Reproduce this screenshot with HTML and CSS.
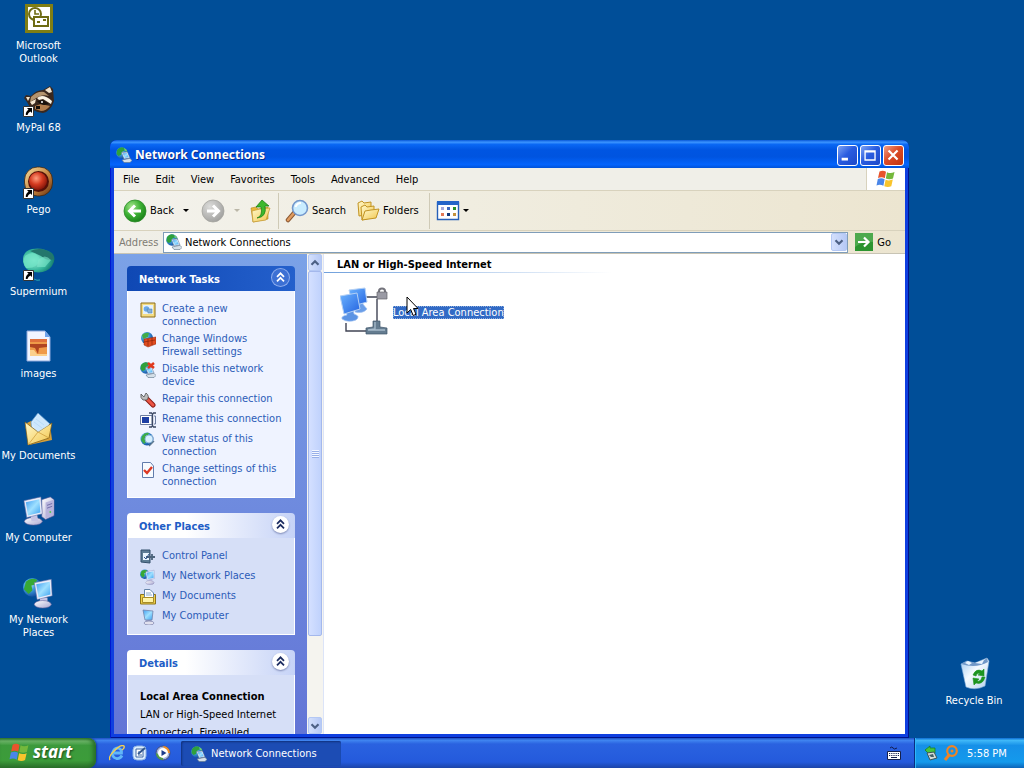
FILE: index.html
```html
<!DOCTYPE html>
<html lang="en">
<head>
  <meta charset="UTF-8">
  <meta name="viewport" content="width=device-width,initial-scale=1.0">
  <title>Network Connections</title>
  <link rel="stylesheet" href="styles.css">
</head>
<body>

<!-- shared icons -->
<svg class="sprite" width="0" height="0" aria-hidden="true">
  <defs>
    <linearGradient id="gScreen" x1="0" y1="0" x2="1" y2="1"><stop offset="0" stop-color="#3f9cf0"/><stop offset=".5" stop-color="#9fe0ff"/><stop offset="1" stop-color="#3aa0f0"/></linearGradient>
    <linearGradient id="gBlue" x1="0" y1="0" x2="1" y2="1"><stop offset="0" stop-color="#6db4ff"/><stop offset="1" stop-color="#2363e0"/></linearGradient>
    <linearGradient id="gCase" x1="0" y1="0" x2="1" y2="1"><stop offset="0" stop-color="#fff"/><stop offset="1" stop-color="#a9a6d0"/></linearGradient>
    <radialGradient id="gGlobe" cx=".35" cy=".35" r=".75"><stop offset="0" stop-color="#d8f4ff"/><stop offset=".4" stop-color="#3f9fe0"/><stop offset="1" stop-color="#0b3f94"/></radialGradient>
    <radialGradient id="gGreen" cx=".35" cy=".3" r=".8"><stop offset="0" stop-color="#a4e58c"/><stop offset=".5" stop-color="#3cb034"/><stop offset="1" stop-color="#157a14"/></radialGradient>
    <radialGradient id="gGrey" cx=".35" cy=".3" r=".8"><stop offset="0" stop-color="#dcdcda"/><stop offset="1" stop-color="#9c9c9a"/></radialGradient>
    <linearGradient id="gFolder" x1="0" y1="0" x2="1" y2="1"><stop offset="0" stop-color="#fff9cc"/><stop offset="1" stop-color="#f2c64c"/></linearGradient>
    <radialGradient id="gRed" cx=".4" cy=".35" r=".7"><stop offset="0" stop-color="#ff9c7c"/><stop offset=".5" stop-color="#d43a20"/><stop offset="1" stop-color="#7c1208"/></radialGradient>
    <linearGradient id="gGold" x1="0" y1="0" x2="1" y2="1"><stop offset="0" stop-color="#f7e0a0"/><stop offset=".6" stop-color="#c07c38"/><stop offset="1" stop-color="#5e2c10"/></linearGradient>
    <radialGradient id="gTeal" cx=".35" cy=".5" r=".7"><stop offset="0" stop-color="#a4f4dc"/><stop offset=".6" stop-color="#35b79c"/><stop offset="1" stop-color="#0b6a62"/></radialGradient>
    <linearGradient id="gBin" x1="0" y1="0" x2="1" y2="1"><stop offset="0" stop-color="#9cc8f0"/><stop offset=".45" stop-color="#f4faff"/><stop offset="1" stop-color="#b4d0ee"/></linearGradient>
  </defs>

  <symbol id="flag" viewBox="0 0 20 20">
    <path d="M3.500 2.500Q7 .8 10 2.800L8.800 9.200Q5.800 7.400 2 9z" fill="#e8542c"/>
    <path d="M11 3.200Q14.500 5 18.500 3L17 9.500Q13.500 11 9.800 9.500z" fill="#74b83c"/>
    <path d="M1.800 10Q5.500 8.500 8.600 10.200L7.400 16.800Q4 15 .5 16.500z" fill="#4a86e8"/>
    <path d="M9.600 10.700Q13 12.200 16.800 10.600L15.300 17.200Q12 18.800 8.300 17.300z" fill="#f9c42c"/>
  </symbol>

  <symbol id="net" viewBox="0 0 16 16">
    <circle cx="6" cy="6" r="5.800" fill="url(#gGlobe)"/>
    <path d="M1 3Q4-1 8 .8L9 3 6 5 5 8 2.500 9 .5 7z" fill="#2fa03c"/>
    <path d="M8 1Q11 2 11.500 5L9 4z" fill="#6fd070"/>
    <path d="M5.500 5.500 11.500 5 14 11 8 12z" fill="#eef4fb" stroke="#50688c" stroke-width=".5"/>
    <path d="M6.600 6.300 11 6 12.800 10.200 8.600 10.900z" fill="url(#gScreen)"/>
    <path d="M6 13 14 11.300 16 13.500 14 15.500 8 15.500z" fill="#d5dfe8" stroke="#5c7488" stroke-width=".6"/>
  </symbol>

  <symbol id="computer" viewBox="0 0 34 34">
    <path d="M20 5 29 2 33 5V22L24 26 20 23z" fill="url(#gCase)" stroke="#5b5b9c" stroke-width=".6"/>
    <path d="M24 8V25L32.500 21V5z" fill="#b8b4dc"/>
    <path d="M25.500 11 31 9M25.500 14 31 12" stroke="#6e6ca8"/>
    <circle cx="29" cy="18" r="1" fill="#52cc50"/>
    <ellipse cx="11" cy="28" rx="9.500" ry="4" fill="url(#gCase)" stroke="#5e5c98" stroke-width=".6"/>
    <path d="M8 21 15 20 16 28 9 28z" fill="#c6c4e4"/>
    <path d="M1 6 19 2 20.500 20 4 24z" fill="#e9ecfa" stroke="#6470a8" stroke-width=".6"/>
    <path d="M3 7.800 17.400 4.500 18.500 18.500 5.300 21.800z" fill="url(#gScreen)"/>
  </symbol>

  <symbol id="places" viewBox="0 0 34 34">
    <circle cx="10" cy="11" r="10" fill="url(#gGlobe)"/>
    <path d="M3 5Q8 0 15 3L13 8 9 9 10 14 6 18 1 13z" fill="#37a934"/>
    <path d="M18 21 26 22 26 29 18 29z" fill="#c6c4e4"/>
    <ellipse cx="21" cy="29" rx="9" ry="4" fill="url(#gCase)" stroke="#5e5c98" stroke-width=".6"/>
    <path d="M12 6 30 2.500 31 20 15 24z" fill="#e9ecfa" stroke="#6470a8" stroke-width=".6"/>
    <path d="M14 7.800 28.500 5 29.200 18.600 16.500 21.800z" fill="url(#gScreen)"/>
  </symbol>

  <symbol id="docs" viewBox="0 0 32 34">
    <path d="M2 12 8 9 27 12 29 28 6 33z" fill="#d59f38"/>
    <path d="M8 10 15 1 27 12 20 23 9 20z" fill="#d4ecff" stroke="#5f98cc" stroke-width=".7"/>
    <path d="M13 7 21 13M11 10 19 16" stroke="#74aee0"/>
    <path d="M2 10 15 20 29 11 26 26 5 33z" fill="url(#gFolder)" stroke="#7b5a14" stroke-width=".7"/>
    <path d="M9 11 15 2 26 13 15 20z" fill="#cbe6fc" opacity=".8"/>
    <path d="M15 20 5 33M15 20 26 26" stroke="#cf9e3c" stroke-width=".8" fill="none"/>
  </symbol>

  <symbol id="shortcut" viewBox="0 0 11 11">
    <path d="M.5.500H10.500V10.500H.5z" fill="#fff" stroke="#333"/>
    <path d="M4 2H9V7L7.400 5.500Q5 6.500 4.500 9H2.800Q2.500 5.500 5.500 3.700z" fill="#000"/>
  </symbol>

  <symbol id="chevrons" viewBox="0 0 19 19">
    <path d="M6 8.800 9.500 5.300 13 8.800M6 13.300 9.500 9.800 13 13.300" fill="none" stroke="currentColor" stroke-width="1.700"/>
  </symbol>

  <symbol id="angle" viewBox="0 0 10 8">
    <path d="M1.500 5.800 5 2.300 8.500 5.800" fill="none" stroke="#4d6185" stroke-width="2.200"/>
  </symbol>
</svg>

<div class="desktop">
  <div class="icons">
    <a class="shortcut" href="#">
      <svg viewBox="0 0 32 34"><path d="M3.500 3.500H28.500V29.500H3.500z" fill="#fff" stroke="#807e14" stroke-width="3"/><circle cx="12" cy="12" r="6" fill="#fff" stroke="#6e6c14" stroke-width="2"/><path d="M12 8V12H16" fill="none" stroke="#6e6c14" stroke-width="1.600"/><path d="M11 15H25V24H11z" fill="#fff" stroke="#6e6c14" stroke-width="2"/><path d="M20 18H23M14 20H17" stroke="#6e6c14" stroke-width="2"/></svg>
      <span>Microsoft Outlook</span>
    </a>
    <a class="shortcut" href="#">
      <svg viewBox="0 0 32 34"><path d="M4 18 1 14 3 11 8 12Q13 6 20 6L27 2 30 5 31 17Q28 27 20 29 8 28 4 18z" fill="#3a281e"/><path d="M22 6 27 3 29 8 26 9z" fill="#f0e2cc"/><path d="M3 13 7 13 5 17z" fill="#f0e2cc"/><path d="M8 13Q14 7 21 8L26 12Q20 10 15 13L7 18z" fill="#b4946e"/><path d="M14 14Q20 9 29 17L28 20 20 15 16 16z" fill="#fbf3e4"/><path d="M7 18 13 15 12 19 9 21z" fill="#f4e6d0"/><path d="M12 22 18 20 27 22Q23 27 18 27L12 25z" fill="#b07c4c"/><path d="M14 17 20 16 26 20 21 21 17 20z" fill="#17100c"/><circle cx="19" cy="18" r="1" fill="#fff"/><path d="M13 22H17V25H13z" fill="#120c08"/><use href="#shortcut" x="0" y="22" width="11" height="11"/></svg>
      <span>MyPal 68</span>
    </a>
    <a class="shortcut" href="#">
      <svg viewBox="0 0 32 34"><rect x="1.500" y="1" width="28" height="29" rx="13" fill="url(#gGold)" stroke="#3c2410" stroke-width=".8"/><circle cx="15.500" cy="15.500" r="10.500" fill="#551008"/><circle cx="15" cy="15" r="9" fill="url(#gRed)"/><use href="#shortcut" x="0" y="22" width="11" height="11"/></svg>
      <span>Pego</span>
    </a>
    <a class="shortcut" href="#">
      <svg viewBox="0 0 32 34"><path d="M0 14Q-1 3 9 1 20-1 29 5 34 10 29 18 23 26 11 24 2 23 0 14z" fill="url(#gTeal)"/><path d="M7 3Q20-2 29 6L31 11Q25 14 18 8 12 5 7 3z" fill="#24766c"/><path d="M2 8Q12 1 17 11 14 21 3 20-1 14 2 8z" fill="#6fe3c5" opacity=".8"/><path d="M15 12Q22 5 28 12L22 19 14 19z" fill="#7ee8cb" opacity=".6"/><path d="M11 31Q14 33 17 32" stroke="#28a4b0" fill="none"/><use href="#shortcut" x="0" y="22" width="11" height="11"/></svg>
      <span>Supermium</span>
    </a>
    <a class="shortcut" href="#">
      <svg viewBox="0 0 32 34"><path d="M4 1H22L27 7V31H4z" fill="#f1f5ff" stroke="#8ea8dc"/><path d="M22 1V7H27z" fill="#6da4ec"/><path d="M7 9H24V25H7z" fill="#ef9a48"/><path d="M7 9H24V12H7z" fill="#e0703c"/><path d="M7 14H24V17L16 18 15 24 12 18 7 17z" fill="#b04420"/><path d="M7 20H11L14 24H24V26H7z" fill="#fbd08c"/></svg>
      <span>images</span>
    </a>
    <a class="shortcut" href="#">
      <svg><use href="#docs"/></svg>
      <span>My Documents</span>
    </a>
    <a class="shortcut" href="#">
      <svg><use href="#computer"/></svg>
      <span>My Computer</span>
    </a>
    <a class="shortcut" href="#">
      <svg><use href="#places"/></svg>
      <span>My Network Places</span>
    </a>
  </div>

  <a class="shortcut bin" href="#">
    <svg viewBox="0 0 32 34"><path d="M3 7 9 4 17 6 29 1 31 4 27 29Q17 34 8 30z" fill="url(#gBin)" stroke="#88b0dc" stroke-width=".6"/><path d="M3 7Q9 3 17 6 23 6 29 1L30 5Q18 12 3 7z" fill="#7098c8"/><path d="M7 6 10 4 14 6 11 8zM17 6 26 3 24 7z" fill="#e8f4ff"/><path d="M15 18Q18 11 24 14L26 12 26 19 20 18 22 17Q19 15 18 19zM27 20Q25 28 18 26L16 28 15 21 21 22 19 24Q23 25 24 20z" fill="#1c9420" stroke="#1c9420" stroke-width=".6"/></svg>
    <span>Recycle Bin</span>
  </a>

  <main class="window">
    <header class="titlebar">
      <svg class="i16"><use href="#net"/></svg>
      <h1>Network Connections</h1>
      <button class="winbtn" aria-label="Minimize"><svg viewBox="0 0 21 21"><path d="M4 13H11V16H4z" fill="#fff"/></svg></button>
      <button class="winbtn" aria-label="Maximize"><svg viewBox="0 0 21 21"><path d="M4.500 5.500H15.500V15.500H4.500zM4 6.500H16" fill="none" stroke="#fff" stroke-width="1.500"/></svg></button>
      <button class="winbtn close" aria-label="Close"><svg viewBox="0 0 21 21"><path d="M5 5 15 15M15 5 5 15" stroke="#fff" stroke-width="2.400"/></svg></button>
    </header>

    <nav class="menubar">
      <button>File</button><button>Edit</button><button>View</button><button>Favorites</button><button>Tools</button><button>Advanced</button><button>Help</button>
      <div class="brand"><svg><use href="#flag"/></svg></div>
    </nav>

    <div class="toolbar">
      <button class="back"><svg class="i24" viewBox="0 0 24 24"><circle cx="12" cy="12" r="11" fill="url(#gGreen)" stroke="#2c8a28" stroke-width=".8"/><path d="M18 12H7M12 6.500 6.500 12 12 17.500" fill="none" stroke="#fff" stroke-width="3"/></svg>Back<i class="caret"></i></button>
      <button class="forward" aria-label="Forward" disabled><svg class="i24" viewBox="0 0 24 24"><circle cx="12" cy="12" r="11" fill="url(#gGrey)" stroke="#a4a4a0" stroke-width=".8"/><path d="M6 12H17M12 6.500 17.500 12 12 17.500" fill="none" stroke="#fff" stroke-width="3"/></svg><i class="caret"></i></button>
      <button aria-label="Up"><svg class="i24" viewBox="0 0 24 24"><path d="M3 9 8 8 10 10 20 8V20L5 23z" fill="#e8b838" stroke="#b08420" stroke-width=".6"/><path d="M4 12 12 10 22 9 18 21 5 23z" fill="url(#gFolder)" stroke="#c49a30" stroke-width=".7"/><path d="M9 19Q15 17 13 8H8L14 1 21 7H17Q19 18 9 19z" fill="#3cb82c" stroke="#14780f" stroke-width=".7"/></svg></button>
      <span class="sep"></span>
      <button class="search"><svg class="i24" viewBox="0 0 24 24"><path d="M9 14 3 21" stroke="#8c5a34" stroke-width="4.500" stroke-linecap="round"/><path d="M9 14 3 21" stroke="#e09c60" stroke-width="2.500" stroke-linecap="round"/><circle cx="15" cy="9" r="7.500" fill="#c9ecff" stroke="#7397cc" stroke-width="1.600"/><path d="M10.500 8Q12 4 16 4" stroke="#fff" stroke-width="2" fill="none"/></svg>Search</button>
      <button class="folders"><svg class="i24" viewBox="0 0 24 24"><path d="M2 4 6 2 8 4 15 3V15L3 17z" fill="url(#gFolder)" stroke="#c29424"/><path d="M5 8 9 6 11 8 18 7V18L6 21z" fill="url(#gFolder)" stroke="#c29424"/><path d="M6 21 9 12 15 11 23 10 20 19z" fill="url(#gFolder)" stroke="#c29424"/></svg>Folders</button>
      <span class="sep"></span>
      <button class="views" aria-label="Views"><svg class="i24" viewBox="0 0 24 24"><path d="M1.500 3.500H22.500V20.500H1.500z" fill="#fff" stroke="#2760b8" stroke-width="1.400"/><path d="M1 2H23V6H1z" fill="#2465c8"/><path d="M5 8H8V11H5z" fill="#a4a8dc"/><path d="M11 8H14V11H11z" fill="#3c68c0"/><path d="M17 8H20V11H17z" fill="#269028"/><path d="M5 14H8V17H5z" fill="#e27854"/><path d="M11 14H14V17H11z" fill="#123a7c"/><path d="M17 14H20V17H17z" fill="#c4923c"/></svg><i class="caret"></i></button>
    </div>

    <form class="address">
      <label for="location">Address</label>
      <div class="combo">
        <svg class="i16"><use href="#net"/></svg>
        <input id="location" type="text" value="Network Connections">
        <button type="button" aria-label="Show locations"><svg class="down" viewBox="0 0 10 8"><use href="#angle"/></svg></button>
      </div>
      <button type="button" class="go"><svg viewBox="0 0 18 18"><path d="M0 0H18V18H0z" fill="#2c9430"/><path d="M0 0H18V9Q8 8 0 14z" fill="#64b860" opacity=".6"/><path d="M3 9H13M9 4.500 13.500 9 9 13.500" fill="none" stroke="#fff" stroke-width="2.200"/></svg>Go</button>
    </form>

    <div class="content">
      <aside class="sidebar">
        <section class="panel primary">
          <header><h2>Network Tasks</h2><button aria-label="Collapse"><svg><use href="#chevrons"/></svg></button></header>
          <ul>
            <li><svg viewBox="0 0 16 16"><path d="M1 1H15V15H1z" fill="#f4dc84" stroke="#8c6c18"/><path d="M3 3H13V12H3z" fill="#e4f0fc"/><circle cx="6.500" cy="7" r="2.800" fill="#6aa8e8"/><path d="M7 7H12V11H8z" fill="#84b0d8" stroke="#4878a8" stroke-width=".5"/></svg><a href="#">Create a new connection</a></li>
            <li><svg viewBox="0 0 16 16"><circle cx="7" cy="6" r="6" fill="url(#gGlobe)"/><path d="M2 3Q5 0 9 1L8 5 3 7z" fill="#42ac48"/><path d="M4 7 16 5V12L8 15 4 13z" fill="#e04c20" stroke="#8c2408" stroke-width=".5"/><path d="M4 10 15 8M8 7V14M12 6V13" stroke="#8c2408" stroke-width=".7"/></svg><a href="#">Change Windows Firewall settings</a></li>
            <li><svg viewBox="0 0 16 16"><use href="#net"/><path d="M8 1 14 6M14 1 8 6" stroke="#e0381c" stroke-width="2.500"/></svg><a href="#">Disable this network device</a></li>
            <li><svg viewBox="0 0 16 16"><path d="M7 7 13 13" stroke="#8c1c14" stroke-width="5" stroke-linecap="round"/><path d="M7 7 13 13" stroke="#ec5444" stroke-width="3" stroke-linecap="round"/><path d="M1 2 4 5 6 1Q10 4 7 8L3 8Q0 6 1 2z" fill="#bcbcbc" stroke="#505050" stroke-width=".8"/></svg><a href="#">Repair this connection</a></li>
            <li><svg viewBox="0 0 16 16"><path d="M.5 3.500H12V12.500H.5z" fill="#fff" stroke="#6c7ca0"/><path d="M2 5H9V11H2z" fill="#1c3ea4"/><path d="M9 1H11.500L12.500 2.500 13.500 1H16M12.500 2V14M9 15H11.500L12.500 13.500 13.500 15H16" fill="none" stroke="#3c4864" stroke-width="1.300"/><path d="M14 4H15.500V12H14" fill="none" stroke="#6c7ca0"/></svg><a href="#">Rename this connection</a></li>
            <li><svg viewBox="0 0 16 16"><circle cx="7" cy="7" r="6.500" fill="url(#gGlobe)"/><path d="M2 4Q5 0 9 1L7 5 6 10 4 12 1 8z" fill="#3caa48"/><circle cx="9" cy="7" r="4" fill="#d6efff" stroke="#8cb4d8"/><path d="M9 14 14 9" stroke="#5c7890" stroke-width="1.500"/></svg><a href="#">View status of this connection</a></li>
            <li><svg viewBox="0 0 16 16"><path d="M2.500.500H10.500L13.500 4V15.500H2.500z" fill="#f8fbff" stroke="#627cac"/><path d="M4 8 7 11 12 5" fill="none" stroke="#dc3824" stroke-width="2.400"/></svg><a href="#">Change settings of this connection</a></li>
          </ul>
        </section>

        <section class="panel">
          <header><h2>Other Places</h2><button aria-label="Collapse"><svg><use href="#chevrons"/></svg></button></header>
          <ul>
            <li><svg viewBox="0 0 16 16"><path d="M1 1H10V14L1 13z" fill="#5c7c94" stroke="#34506c"/><path d="M3 4H9V11H3z" fill="#e8f4fc"/><path d="M6 8H15M12 5V11" stroke="#4c647c" stroke-width="1.800" fill="none"/><path d="M4 8 6 10 9 5" stroke="#2c548c" fill="none"/></svg><a href="#">Control Panel</a></li>
            <li><svg><use href="#places"/></svg><a href="#">My Network Places</a></li>
            <li><svg viewBox="0 0 16 16"><path d="M.5 5.500H15.500V15H.5z" fill="#f0d048" stroke="#8e761c"/><path d="M4.500.500H10L13.500 4V12H4.500z" fill="#fff" stroke="#6484a8"/><path d="M6 4H11M6 6H12" stroke="#88a8cc"/><path d="M2.500 8.500H13.500V13.500H2.500z" fill="#fff4a8" stroke="#a88c28"/></svg><a href="#">My Documents</a></li>
            <li><svg viewBox="0 0 16 16"><path d="M6 10 11 10 12 14 6 14z" fill="#a8a8cc"/><ellipse cx="9" cy="14" rx="5" ry="2" fill="#e0e0ee" stroke="#6870a0" stroke-width=".6"/><path d="M3 1 13 2 12 11 5 11z" fill="url(#gScreen)" stroke="#7484ac" stroke-width=".8"/></svg><a href="#">My Computer</a></li>
          </ul>
        </section>

        <section class="panel details">
          <header><h2>Details</h2><button aria-label="Collapse"><svg><use href="#chevrons"/></svg></button></header>
          <div class="info">
            <strong>Local Area Connection</strong>
            <p>LAN or High-Speed Internet</p>
            <p>Connected, Firewalled</p>
          </div>
        </section>
      </aside>

      <div class="scrollbar">
        <button aria-label="Scroll up"><svg viewBox="0 0 10 8"><use href="#angle"/></svg></button>
        <div class="thumb"><i></i></div>
        <div class="track"></div>
        <button aria-label="Scroll down"><svg class="down" viewBox="0 0 10 8"><use href="#angle"/></svg></button>
      </div>

      <section class="pane">
        <h2>LAN or High-Speed Internet</h2>
        <a class="connection" href="#">
          <svg viewBox="0 0 48 50">
            <path d="M25 10H38M37 12V34M6 36V44H26" fill="none" stroke="#404454" stroke-width="1.400"/>
            <path d="M16 17 22 16 27 22Q23 27 15 25z" fill="#6a9ee8" stroke="#9cbef0" stroke-width=".7"/>
            <path d="M9 3 25 1 27 15 13 19z" fill="url(#gBlue)" stroke="#b4d0f4"/>
            <path d="M6 24 13 22 14 27Q21 29 16 33 8 36 2 32 1 29 7 28z" fill="#5c94e4" stroke="#9cbef0" stroke-width=".7"/>
            <path d="M0 9 17 6 20 22 4 27z" fill="url(#gBlue)" stroke="#b4d0f4"/>
            <path d="M39 6V4Q39 1.500 42 1.500T45 4V6" fill="none" stroke="#74747c" stroke-width="2"/>
            <path d="M37 5H47V12H37z" fill="#9a9aa4" stroke="#64646c" stroke-width=".7"/>
            <path d="M33 34H40V40L47 41V47H26V41L33 40z" fill="#647c90" stroke="#40566c" stroke-width=".7"/>
            <path d="M35 35V42L28 43H45" fill="none" stroke="#a8bccc" stroke-width="1.300"/>
          </svg>
          <span>Local Area Connection</span>
        </a>
      </section>
    </div>
  </main>

  <!-- mouse pointer -->
  <svg class="cursor" viewBox="0 0 13 21"><path d="M1 1V17L4.700 13.500 7.200 19.500 10 18.300 7.500 12.500H12z" fill="#fff" stroke="#000"/></svg>
</div>

<footer class="taskbar">
  <button class="start"><svg><use href="#flag"/></svg>start</button>
  <div class="quick">
    <button aria-label="Internet Explorer"><svg viewBox="0 0 16 16"><path d="M13 10.500Q11 14 7.500 13.500 3 12.500 3.500 8 5 3 9 3 13 4 12.500 8H5" fill="none" stroke="#62b8f8" stroke-width="2.800"/><path d="M1 15Q-1 12 5 6 12-1 15 1 16 3 13 5" fill="none" stroke="#f4d050" stroke-width="1.400"/></svg></button>
    <button aria-label="Show Desktop"><svg viewBox="0 0 16 16"><rect x="1" y="1" width="13" height="14" rx="4" fill="#dcecfc" stroke="#8cb4e4"/><path d="M4 4H11V12H4z" fill="#fff" stroke="#3c68a4"/><path d="M6 9 13 3" stroke="#30558c" stroke-width="2"/><path d="M6 7H8M6 10H10" stroke="#3c68a4"/></svg></button>
    <button aria-label="Media Player"><svg viewBox="0 0 16 16"><circle cx="8" cy="8" r="7" fill="#a4b4dc" stroke="#404c80"/><path d="M8 1A7 7 0 0 1 15 8H11z" fill="#f09028"/><path d="M1 8A7 7 0 0 0 8 15V11z" fill="#509c48"/><circle cx="8" cy="8" r="5" fill="#fff"/><path d="M6.500 5 11.500 8 6.500 11z" fill="#1c3c8c"/></svg></button>
  </div>
  <button class="task"><svg class="i16"><use href="#net"/></svg>Network Connections</button>
  <button class="lang" aria-label="Keyboard"><svg viewBox="0 0 14 14"><path d="M3 2Q5 0 6 2T10 2" fill="none" stroke="#101c50"/><path d="M.5 5.500H13.500V13.500H.5z" fill="#fff" stroke="#14204c"/><path d="M2 7.500H12M2 9.500H12" stroke="#14204c" stroke-width="1.200" stroke-dasharray="1.200 1"/><path d="M4 11.500H10" stroke="#14204c"/></svg></button>
  <div class="tray">
    <svg class="i16" viewBox="0 0 16 16"><path d="M2 5 7 1V3H12V8H7V10z" fill="#46c43c" stroke="#14781c" stroke-width=".7"/><path d="M4 8 11 7 14 13 7 15z" fill="#d4dcd8" stroke="#3c5458"/><path d="M6 10 10 9 11 12 8 12z" fill="#446068"/></svg>
    <svg class="i16" viewBox="0 0 16 16"><circle cx="9" cy="6" r="4.800" fill="none" stroke="#f08424" stroke-width="2.200"/><circle cx="9" cy="6" r="1.500" fill="#f08424"/><path d="M6 10 2 15" stroke="#f08424" stroke-width="3"/></svg>
    <time>5:58 PM</time>
  </div>
</footer>

</body>
</html>
```
FILE: styles.css
```css
:root{--link:#215dc6;--sel:#316ac5}
*{box-sizing:border-box;margin:0;padding:0}
body{height:100vh;display:flex;flex-direction:column;overflow:hidden;background:#004e98;font:11px/13px "DejaVu Sans Condensed","Noto Sans",sans-serif;color:#000}
button,input{font:inherit;color:inherit;border:0;background:none}
button{display:flex;align-items:center}
a{color:inherit;text-decoration:none}
svg{display:block;flex:none}
h1,h2{font-size:11px;font-weight:bold}
ul{list-style:none}
.sprite{position:absolute}
.i16{width:16px;height:16px}
.i24{width:24px;height:24px}
.down{transform:rotate(180deg)}

/* desktop */
.desktop{flex:1;position:relative;overflow:hidden}
.icons{display:grid;grid-auto-rows:82px;width:77px;padding-top:2px}
.shortcut{display:flex;flex-direction:column;align-items:center;gap:3px;color:#fff;text-align:center}
.shortcut svg{width:32px;height:34px}
.bin{position:absolute;right:10px;bottom:21px;width:80px;height:60px}

/* window */
.window{position:absolute;left:110px;right:115px;top:140px;bottom:0;display:flex;flex-direction:column;padding:0 4px 4px;background:#0f3fe0;border-radius:7px 7px 0 0;overflow:hidden;box-shadow:inset 1px 0 #0019cf,inset -1px 0 #00138c,inset 0 -1px #00138c}
.titlebar{flex:none;height:28px;display:flex;align-items:center;gap:2px;margin:0 -4px;padding:2px 5px 0 6px;color:#fff;background:linear-gradient(#0958d8 0,#3b94ff 8%,#0a68f4 16%,#0055e2 35%,#0054e0 60%,#0464fc 88%,#0052d8 100%)}
.titlebar h1{flex:1;margin-left:1px;font:bold 12px/16px "Noto Sans","Open Sans",sans-serif;text-shadow:1px 1px #0a2c86}
.winbtn{width:21px;height:21px;border:1px solid #fff;border-radius:3px;background:linear-gradient(135deg,#7ea4f4,#2a5ce0 45%,#1c48c8)}
.winbtn svg{width:19px;height:19px}
.close{background:linear-gradient(135deg,#f0a088,#dc4c28 45%,#c03410)}

.menubar{flex:none;height:23px;display:flex;padding-left:1px;background:#f0efe8;border-bottom:1px solid #d8d2bd}
.menubar button{padding:0 8px}
.brand{width:39px;margin-left:auto;display:grid;place-items:center;background:#fff;border-left:1px solid #d8d2bd}
.brand svg{width:20px;height:20px}

.toolbar{flex:none;height:40px;display:flex;align-items:center;padding:0 9px;background:linear-gradient(90deg,#f3f2ec,#f0ede0 45%,#ece5d0);border-bottom:1px solid #d8d2bd}
.toolbar button{gap:3px}
.caret{border:3px solid transparent;border-top-color:#000;border-bottom:0;margin-left:6px}
.forward{margin:0 8px 0 12px}
.forward .caret{border-top-color:#bbb7a8}
.sep{width:1px;height:36px;margin:0 6px;background:#cfcab6}
.folders{margin-left:10px}
.folders + .sep{margin-left:10px}
.views .caret{margin-left:0}

.address{flex:none;height:23px;display:flex;align-items:center;padding:1px 14px 1px 5px;background:linear-gradient(90deg,#f0efe8,#ece5d0);border-bottom:1px solid #c8c4b4}
.address label{width:44px;color:#7f7c73}
.combo{flex:1;height:21px;display:flex;align-items:center;padding-left:2px;background:#fff;border:1px solid #7f9db9}
.combo input{flex:1;min-width:0;padding-left:3px;outline:0}
.combo button,.scrollbar button{justify-content:center;background:linear-gradient(90deg,#d4e0fc,#b6c9f6);border:1px solid #b4c8f4;border-radius:2px}
.combo button{width:16px;height:18px}
.combo button svg,.scrollbar button svg{width:10px;height:8px}
.go{gap:4px;margin-left:7px}
.go svg{width:18px;height:18px}

/* explorer body */
.content{flex:1;min-height:0;display:flex;background:#fff}
.sidebar{width:193px;padding:12px 12px 0 13px;overflow:hidden;background:linear-gradient(#7ba2e7,#6375d6)}
.panel{margin-bottom:15px;color:var(--link)}
.panel header{height:25px;display:flex;align-items:center;justify-content:space-between;padding:2px 6px 0 12px;border-radius:4px 4px 0 0;background:linear-gradient(90deg,#fff 35%,#c6d3f7)}
.panel header button{width:17px;height:17px;margin-bottom:4px;justify-content:center;border-radius:50%;background:#fff;box-shadow:0 1px 2px #7c88b4;color:#1c2c60}
.panel header svg{width:19px;height:19px}
.panel header h2{color:#215dc6}
.panel ul,.info{border:1px solid #fff;border-top:0;background:#d6dff7}
.panel ul{display:grid;gap:4px;padding:11px 12px 9px}
.panel li{display:flex;gap:6px;color:#2c5cb8}
.panel li svg{width:16px;height:16px}
.primary header{background:linear-gradient(90deg,#0f48b4,#2460cc)}
.primary header h2{color:#fff}
.primary header button{background:#3c70d4;box-shadow:0 0 0 1px #8cacec;color:#fff}
.primary ul{background:#eff3ff}
.info{padding:13px 12px;color:#000;line-height:18px}
.info p{white-space:nowrap}

.scrollbar{width:17px;display:grid;grid-template-rows:17px 365fr 81fr 17px;padding:0 1px;background:#f5f4ef;border-right:1px solid #dce4f8}
.thumb{display:grid;place-items:center;border:1px solid #a4b8ec;border-radius:2px;background:linear-gradient(90deg,#d4e0ff,#c0d2fc)}
.thumb i{width:7px;height:8px;background:repeating-linear-gradient(#f4f8ff 0 1px,#98b0e8 1px 2px)}

.pane{flex:1}
.pane h2{height:19px;padding:4px 13px 0;background:linear-gradient(90deg,#70a0dc,#fff) left bottom/288px 1px no-repeat}
.connection{display:flex;align-items:center;gap:5px;width:max-content;margin:14px 0 0 16px}
.connection svg{width:48px;height:50px}
.connection span{background:var(--sel);color:#fff;outline:1px dotted #8cacdc;outline-offset:-1px}
.cursor{position:absolute;left:406px;top:296px;width:13px;height:21px}

/* taskbar */
.taskbar{flex:none;height:30px;display:flex;color:#fff;background:linear-gradient(#1f4fc4 0,#3f84f0 8%,#2a62e0 20%,#245adc 80%,#1c44a8)}
.start{width:96px;gap:3px;padding:0 0 2px 9px;border-radius:0 8px 8px 0;font:italic bold 17px/24px "Noto Sans","Open Sans",sans-serif;text-shadow:1px 1px 2px #1c4c1c;background:linear-gradient(#2f7c2e 0,#6cb468 10%,#3c9a3c 25%,#3c9c3a 75%,#2a702a);box-shadow:inset -3px 0 4px #286c28,1px 0 2px #123c9c}
.start svg{width:21px;height:21px}
.quick{display:flex;gap:7px;margin:0 10px 0 13px}
.quick svg{width:16px;height:16px}
.task{width:160px;gap:4px;margin:3px 0 2px;padding:0 10px;border-radius:2px;background:#1c4cb4;box-shadow:inset 1px 1px 2px #10307c}
.lang{margin-left:auto;margin-right:13px}
.lang svg{width:14px;height:14px}
.tray{width:110px;display:flex;align-items:center;gap:4px;padding-left:8px;background:linear-gradient(#0c6cd4 0,#40b8f8 8%,#1690e8 25%,#149aec 80%,#0c64b8);border-left:1px solid #092e80;box-shadow:inset 1px 0 #30b8f8}
.tray time{margin-left:4px}
```
